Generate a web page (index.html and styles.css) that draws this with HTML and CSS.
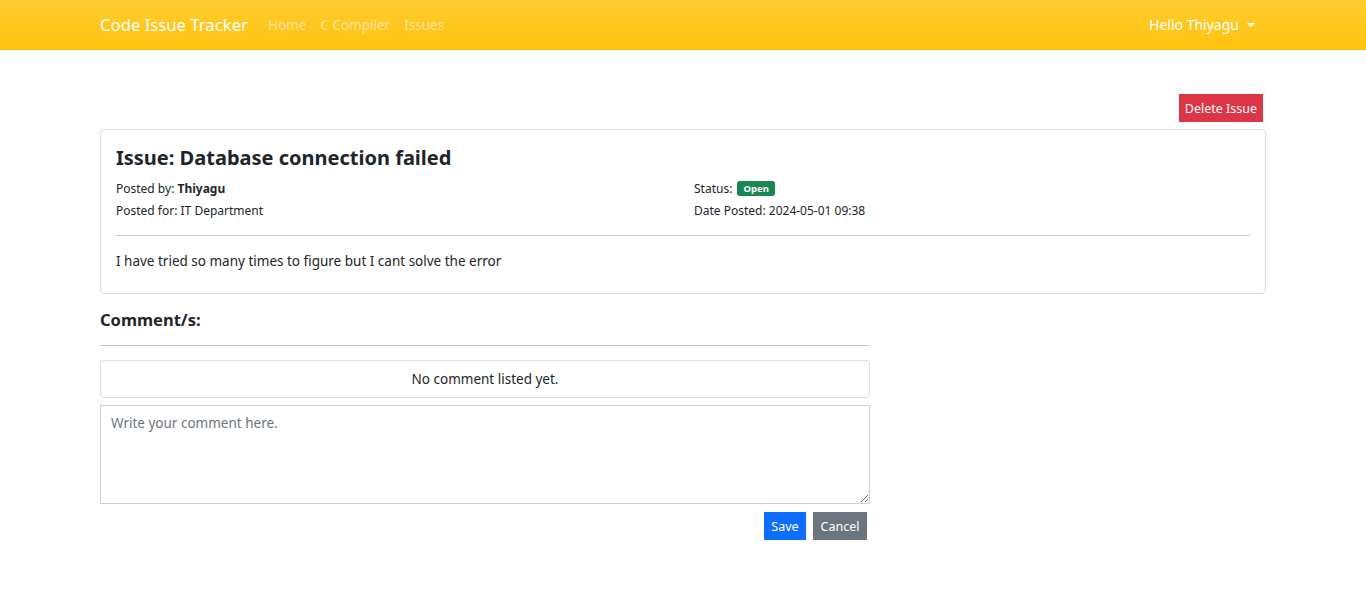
FILE: index.html
```html
<!DOCTYPE html>
<html lang="en">
<head>
<meta charset="utf-8">
<title>Code Issue Tracker</title>
<link rel="stylesheet" href="styles.css">
</head>
<body>
<nav class="navbar">
  <div class="nav-inner">
    <div class="nav-left">
      <a class="brand" href="#">Code Issue Tracker</a>
      <a class="nav-link" href="#">Home</a>
      <a class="nav-link" href="#">C Compiler</a>
      <a class="nav-link" href="#">Issues</a>
    </div>
    <a class="user" href="#">Hello Thiyagu <span class="caret"></span></a>
  </div>
</nav>
<main class="container">
  <div class="actions">
    <button class="btn btn-danger">Delete Issue</button>
  </div>
  <section class="card">
    <h2 class="issue-title">Issue: Database connection failed</h2>
    <div class="meta">
      <div class="meta-col">
        <div class="meta-line">Posted by: <strong>Thiyagu</strong></div>
        <div class="meta-line">Posted for: IT Department</div>
      </div>
      <div class="meta-col">
        <div class="meta-line">Status: <span class="badge">Open</span></div>
        <div class="meta-line">Date Posted: 2024-05-01 09:38</div>
      </div>
    </div>
    <hr class="rule">
    <p class="desc">I have tried so many times to figure but I cant solve the error</p>
  </section>
  <section class="comments">
    <h3 class="comments-title">Comment/s:</h3>
    <hr class="rule rule-c">
    <div class="no-comment">No comment listed yet.</div>
    <textarea class="comment-input" placeholder="Write your comment here."></textarea>
    <div class="form-actions">
      <button class="btn btn-primary">Save</button>
      <button class="btn btn-secondary">Cancel</button>
    </div>
  </section>
</main>
</body>
</html>
```

FILE: styles.css
```css
* { box-sizing: border-box; }
body {
  margin: 0;
  font-family: "Noto Sans", "Open Sans", sans-serif;
  color: #212529;
  background: #fff;
  font-size: 14px;
}
a { text-decoration: none; }
.navbar {
  height: 50px;
  background: linear-gradient(to bottom, #ffcd31, #ffc10d);
}
.nav-inner {
  width: 1166px;
  margin: 0 auto;
  height: 50px;
  display: flex;
  align-items: center;
  justify-content: space-between;
}
.nav-left { display: flex; align-items: center; }
.brand {
  color: #fff;
  font-size: 16.7px;
  margin-right: 20px;
  margin-top: -1px;
}
.nav-link {
  color: rgba(255,255,255,0.55);
  font-size: 13.5px;
  margin-right: 14px;
}
.user {
  color: #fff;
  font-size: 14px;
  margin-right: 11px;
  margin-top: -1px;
  display: flex;
  align-items: center;
}
.caret {
  display: inline-block;
  margin-left: 8px;
  width: 0; height: 0;
  border-left: 4px solid transparent;
  border-right: 4px solid transparent;
  border-top: 4px solid #fff;
}
.container {
  width: 1166px;
  margin: 0 auto;
}
.actions {
  display: flex;
  justify-content: flex-end;
  padding: 44px 3px 7px 0;
}
.btn {
  border: 0;
  font-family: inherit;
  font-size: 12.5px;
  color: #fff;
  height: 28px;
  padding: 0;
  white-space: nowrap;
  cursor: pointer;
}
.btn-danger { background: #dc3545; width: 84px; }
.btn-primary { background: #0d6efd; width: 42px; }
.btn-secondary { background: #6c757d; width: 54px; }
.card {
  border: 1px solid #dcdcdc;
  border-radius: 4px;
  padding: 13px 15px 22px;
}
.issue-title {
  margin: 0 0 5px;
  font-size: 20px;
  font-weight: 700;
  line-height: 30px;
}
.meta {
  display: flex;
}
.meta-col { width: 50%; padding-right: 13px; }
.meta-col + .meta-col { padding-left: 11px; }
.meta-line {
  font-size: 12px;
  line-height: 22px;
  height: 22px;
}
.badge {
  display: inline-block;
  background: #198754;
  color: #fff;
  font-size: 9.5px;
  font-weight: 700;
  line-height: 15px;
  padding: 0 6px;
  border-radius: 3px;
  margin-left: 2px;
  vertical-align: 1px;
}
.rule {
  border: 0;
  border-top: 1px solid #c8c8c8;
  margin: 13px 0 15px;
}
.desc {
  margin: 0;
  font-size: 13.5px;
  line-height: 20px;
}
.comments { width: 770px; }
.comments-title {
  margin: 15px 0 0;
  font-size: 16.5px;
  font-weight: 700;
  line-height: 22px;
}
.rule.rule-c { margin: 14px 0 14px; }
.no-comment {
  border: 1px solid #dcdcdc;
  border-radius: 4px;
  height: 38px;
  display: flex;
  align-items: center;
  justify-content: center;
  font-size: 13.5px;
}
.comment-input {
  display: block;
  width: 100%;
  height: 99px;
  margin-top: 7px;
  border: 1px solid #cfcfcf;
  border-radius: 0;
  padding: 8px 10px;
  font-family: inherit;
  font-size: 13.5px;
  color: #212529;
  resize: vertical;
}
.comment-input::placeholder { color: #6c757d; }
.form-actions {
  display: flex;
  justify-content: flex-end;
  gap: 7px;
  padding: 8px 3px 0 0;
}
```
